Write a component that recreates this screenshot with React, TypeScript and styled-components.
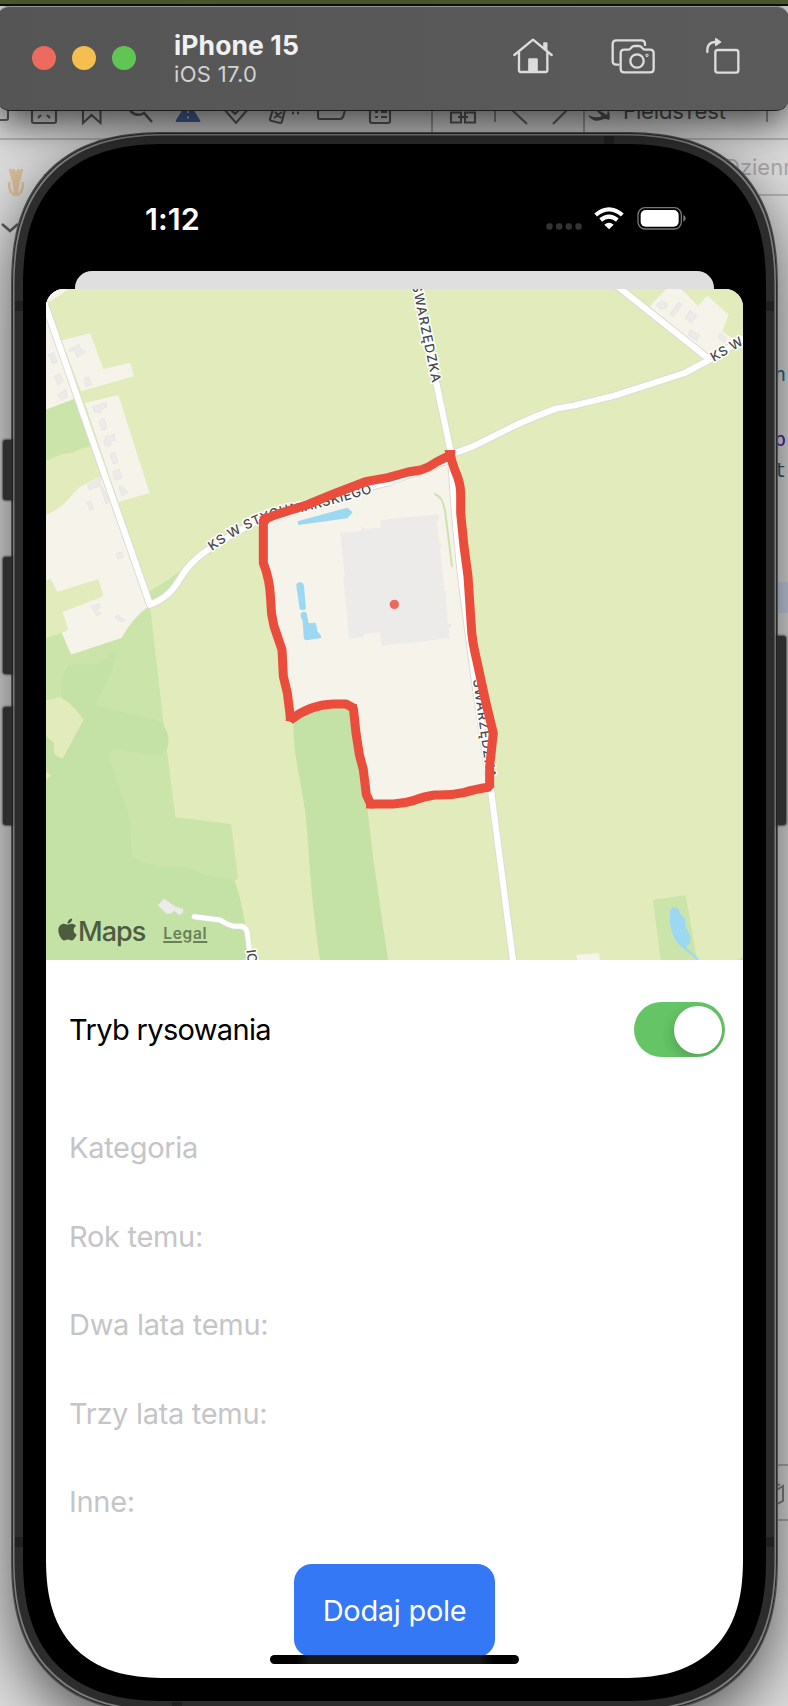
import React from "react";
import styled, { createGlobalStyle, css } from "styled-components";
import { FaApple } from "react-icons/fa";

const GlobalStyle = createGlobalStyle`
  *, *::before, *::after { box-sizing: border-box; }
  body { margin: 0; background: #b0b0b0; }
`;

const sans = `Inter, "Liberation Sans", sans-serif`;

const Desktop = styled.div`
  position: relative;
  display: flex;
  flex-direction: column;
  width: 788px;
  height: 1706px;
  overflow: hidden;
  background: #dcdcdc;
  font-family: ${sans};
`;

/* ---------- editor window behind the simulator ---------- */

const Editor = styled.div`
  position: absolute;
  inset: 0;
  display: flex;
  flex-direction: column;
  padding-top: 100px;
  color: #6c6c6c;
`;

const EditorBar = styled.div`
  display: flex;
  height: 40px;
  border-bottom: 2px solid #b5b5b5;
`;

const EditorTabs = styled.div`
  display: flex;
  justify-content: space-between;
  height: 56px;
`;

const NavigatorMark = styled.div`
  width: 60px;
  height: 100px;
`;

const Crumb = styled.div`
  width: 70px;
  padding-left: 6px;
  overflow: hidden;
  border-bottom: 2px solid #b5b5b5;
  color: #a9a9a9;
  font-size: 22px;
  line-height: 54px;
  white-space: nowrap;
`;

const CodeEdge = styled.div`
  display: flex;
  flex-direction: column;
  align-self: flex-end;
  width: 13px;
  padding-top: 158px;
  font-family: "DejaVu Sans Mono", monospace;
  font-size: 20px;
`;

const CodeGlyph = styled.span<{ $color: string; $height: number }>`
  height: ${(p) => p.$height}px;
  margin-left: -1px;
  color: ${(p) => p.$color};
  line-height: 40px;
`;

const LineHighlight = styled.div`
  height: 31px;
  margin-top: 92px;
  background: #c6d0e4;
`;

const EditorFooter = styled.div`
  height: 57px;
  margin-top: 851px;
  border-top: 2px solid #a9a9a9;
  border-bottom: 2px solid #a9a9a9;
`;

/* ---------- simulator title bar ---------- */

const WallpaperStrip = styled.div`
  position: relative;
  z-index: 3;
  flex: none;
  height: 6px;
  background: #46562a;
  border-bottom: 2px solid #0c0d08;
`;

const TitleBar = styled.header`
  position: relative;
  z-index: 2;
  display: flex;
  align-items: center;
  flex: none;
  width: 792px;
  height: 105px;
  margin-left: -3px;
  padding: 0 48px 0 35px;
  border-radius: 13px;
  border-bottom: 1px solid #1d1d1d;
  background: linear-gradient(90deg, #555 0%, #5b5b5b 100%);
  box-shadow: inset 0 2px 0 -1px #969696, 0 12px 40px rgba(0, 0, 0, 0.72);
`;

const TrafficLights = styled.div`
  display: flex;
  gap: 16px;
`;

const Light = styled.span<{ $color: string }>`
  width: 24px;
  height: 24px;
  border-radius: 50%;
  background: ${(p) => p.$color};
`;

const Titles = styled.div`
  margin-left: 38px;
  flex: 1;
`;

const DeviceName = styled.div`
  color: #f0f0f0;
  font-size: 26.5px;
  font-weight: 700;
  letter-spacing: 0.1px;
  line-height: 32px;
`;

const OsVersion = styled.div`
  color: #d2d2d2;
  font-size: 22px;
  letter-spacing: 0.3px;
  line-height: 27px;
`;

const Tools = styled.div`
  display: flex;
  align-items: center;
  padding-bottom: 5px;
`;

const ToolIcon = styled.svg<{ $gap?: number }>`
  display: block;
  margin-left: ${(p) => p.$gap ?? 0}px;
  fill: none;
  stroke: #dcdcdc;
  stroke-width: 7;
  stroke-linejoin: round;
  stroke-linecap: round;
`;

/* ---------- device ---------- */

const corner = (round: number, smooth: number) => css`
  border-radius: ${round}px;
  @supports (corner-shape: superellipse(1.3)) {
    border-radius: ${smooth}px;
    corner-shape: superellipse(1.3);
  }
`;

const Phone = styled.main`
  position: relative;
  z-index: 1;
  flex: none;
  width: 765px;
  height: 1579px;
  margin: 22px 0 0 12px;
  padding: 11px;
  background: #2c2c2c;
  box-shadow: inset 0 0 0 1px #2a2a2a, inset 0 0 0 2.5px #7c7c7c,
    0 0 0 1px #4e4e4e, 0 20px 60px rgba(0, 0, 0, 0.62);
  ${corner(138, 154)}
`;

const sideRect = css<{ $top: number; $height: number }>`
  position: absolute;
  top: ${(p) => p.$top - 133}px;
  height: ${(p) => p.$height}px;
`;

const SideButton = styled.i<{ $top: number; $height: number; $right?: boolean }>`
  ${sideRect}
  ${(p) => (p.$right ? "right: -9px;" : "left: -9px;")}
  width: 9px;
  border-radius: ${(p) => (p.$right ? "0 3px 3px 0" : "3px 0 0 3px")};
  background: #2d2d2d;
  box-shadow: 0 0 2px 1px rgba(20, 20, 20, 0.6);
`;

const Antenna = styled.i<{ $top: number; $height: number; $left: number; $width: number }>`
  ${sideRect}
  left: ${(p) => p.$left}px;
  width: ${(p) => p.$width}px;
  background: #202020;
`;

const Bezel = styled.div`
  height: 1557px;
  padding: 23px;
  background: #000;
  ${corner(126, 143)}
`;

const Screen = styled.div`
  position: relative;
  display: flex;
  flex-direction: column;
  height: 1511px;
  overflow: hidden;
  background: #000;
  ${corner(103, 120)}
`;

const StatusBar = styled.div`
  display: flex;
  flex: none;
  align-items: center;
  justify-content: space-between;
  height: 104px;
  padding: 0 56px 0 99px;
`;

const Clock = styled.time`
  height: 104px;
  color: #fff;
  font-size: 30.5px;
  font-weight: 600;
  letter-spacing: 0.1px;
  line-height: 104px;
`;

const StatusIcons = styled.svg`
  display: block;
  margin-bottom: 2px;
`;

const SheetBehind = styled.div`
  flex: none;
  width: 639px;
  height: 18px;
  margin: 0 auto;
  border-radius: 17px 17px 0 0;
  background: #dfdfdf;
`;

const Sheet = styled.section`
  display: flex;
  flex: 1;
  flex-direction: column;
  overflow: hidden;
  border-radius: 18px 18px 0 0;
  background: #fff;
`;

const MapView = styled.div`
  position: relative;
  height: 671px;
`;

const MapDrawing = styled.svg`
  display: block;
`;

const Attribution = styled.div`
  position: absolute;
  left: 12px;
  bottom: 12px;
  display: flex;
  align-items: center;
  height: 34px;
  color: #4d5c41;
`;

const AppleMark = styled(FaApple)`
  margin: -3px -4px 0 -3px;
`;

const MapsWord = styled.span`
  margin-left: 2px;
  font-size: 27px;
  font-weight: 500;
  letter-spacing: -1px;
`;

const LegalLink = styled.a`
  margin: 4px 0 0 18px;
  color: #6a8058;
  font-size: 15.5px;
  font-weight: 600;
  letter-spacing: 0.7px;
  text-decoration: underline;
  text-decoration-thickness: 1.5px;
  text-underline-offset: 2px;
`;

const Form = styled.form`
  display: flex;
  flex: 1;
  flex-direction: column;
`;

const ToggleRow = styled.label`
  display: flex;
  align-items: center;
  justify-content: space-between;
  height: 138px;
  padding: 1px 18px 0 23px;
  font-size: 29px;
  letter-spacing: -0.65px;
  color: #000;
`;

const Toggle = styled.span`
  display: flex;
  justify-content: flex-end;
  width: 91px;
  height: 55px;
  padding: 3.5px;
  overflow: hidden;
  border-radius: 28px;
  background: #65c466;
`;

const Knob = styled.span`
  width: 48px;
  height: 48px;
  border-radius: 50%;
  background: #fff;
  box-shadow: -2px 5px 12px rgba(0, 0, 0, 0.16);
`;

const Fields = styled.div`
  display: flex;
  flex-direction: column;
  padding: 6px 0 0 23px;
`;

const Field = styled.div`
  height: 88.6px;
  color: #c5c5c7;
  font-size: 29px;
  letter-spacing: -0.3px;
  line-height: 88.6px;
`;

const Submit = styled.button`
  align-self: center;
  width: 201px;
  height: 93px;
  margin-top: 17px;
  padding: 0;
  border: 0;
  border-radius: 18px;
  background: #3478f6;
  color: #fff;
  font-family: inherit;
  font-size: 29px;
  letter-spacing: -0.3px;
`;

const HomeIndicator = styled.div`
  position: absolute;
  left: 50%;
  bottom: 14px;
  width: 249px;
  height: 9px;
  margin-left: -124.5px;
  border-radius: 5px;
  background: linear-gradient(90deg, #000 10%, #181818 16%, #181818 84%, #000 90%);
`;

const EditorIcons = () => (
  <svg width="788" height="37" viewBox="0 100 788 37" fill="none" stroke="#5f5f5f" strokeWidth="2.100">
    <path d="M0 120H6q2 0 2-2V104M32 104v17q0 2 2 2h20q2 0 2-2v-17M38 118l3-3m6 0l3 3M83 104v19l8.500-8 9 8v-19" />
    <path d="M129 108a10 10 0 0 0 15 5l8 9" strokeWidth="2.600" />
    <path d="M177 122q-2 0-1-2l9-14h6l9 14q1 2-1 2z" fill="#4c66a6" stroke="none" />
    <path d="M188 106v7m0 3v2.500" stroke="#b9bdc8" strokeWidth="2" />
    <path d="M224 109l12 14 12-14M230 109l5 5 6-6M274 106l-4 13q0 2 2 2l8 2q2 0 2-2l4-15M275 112l6 6m1-6l-8 6" />
    <path d="M292 113h2m3 0h2m-4-4h2" strokeWidth="2.500" />
    <path d="M318 104v13q0 2 2 2h20q2 0 3-2l3-10M370 104v17q0 2 2 2h16q2 0 2-2v-17M375 112h3m3 0h6m-12 5h3m3 0h6" />
    <path d="M451 112.500h10v10h-10zM465 112.500h10v10h-10zM458 117h10" />
    <path d="M495 104v18M767 104v18" stroke="#777" strokeWidth="1.500" />
    <path d="M512 110l15 14m26 0l14-14" strokeWidth="2.200" stroke="#6c6c6c" />
    <path d="M432 100v32M584 100v32" stroke="#777" strokeWidth="1.200" />
    <path d="M588 115q8 4 14 1-5-4-7-8l12 7 1-5q3 5 1 10-4-2-8 0-8 3-13-5z" fill="#5c5c5c" stroke="none" />
    <text x="623" y="119" fill="#555" stroke="none" fontSize="22" textLength="103" fontFamily="Inter, sans-serif">FieldsTest</text>
  </svg>
);

const StreetLabels = styled.g`
  fill: #4a4a4a;
  stroke: #fff;
  stroke-width: 9px;
  stroke-linejoin: round;
  paint-order: stroke;
  font-family: ${sans};
  font-size: 39px;
  font-weight: 450;
`;

const roads = [
  "M130 60L450 975C525 945 530 905 560 868Q585 835 640 800Q710 755 790 715Q900 680 1000 650L1164 608L1350 540",
  "M1358 522Q1400 508 1430 495L1544 438Q1610 408 1668 387L1724 377L1844 348L2054 280L2129 240L2240 170",
  "M1850 18L2129 240",
  "M1244 0L1352 515Q1368 780 1392 960L1424 1200L1474 1540L1540 2050",
];

const FieldOutline =
  "M1350 527L1364 570Q1382 610 1382 640V700L1392 800L1404 890L1414 1040Q1415 1080 1432 1150L1447 1220L1459 1275L1480 1360L1469 1460V1522Q1420 1530 1394 1538Q1350 1548 1304 1546Q1270 1550 1240 1563Q1210 1572 1180 1573H1112L1099 1545L1090 1470L1078 1425L1068 1360L1060 1285L1038 1273H1000Q930 1275 872 1320L862 1240L850 1190L846 1110L822 1040Q812 1000 812 960Q810 900 790 850V720L830 704L920 676L1010 639L1100 605L1164 594L1224 577L1262 571Q1285 564 1308 548Z";

const FieldMap = () => (
  <MapDrawing width="697" height="671" viewBox="138 28 2091 2013" preserveAspectRatio="none">
    <rect x="138" y="28" width="2091" height="2013" fill="#e1ebbb" />
    <g fill="#f6f3ea">
      <path d="M138 28H205Q170 55 138 72zM138 80L160 130L236 354L138 390zM185 182L271 161L310 268L391 249L402 290L243 335zM255 370L355 346L449 640L355 667z" />
      <path d="M138 706C200 680 210 645 240 622Q270 605 303 590L450 975Q390 1025 365 1075L213 1125L185 1060L205 1050L188 997L310 950L295 898L172 937L152 897L138 902z" />
      <path d="M1949 80L1999 28H2044L2094 78L2122 48L2186 105L2167 155L2204 180L2129 240zM1729 2025L1797 2020L1800 2041H1732z" />
    </g>
    <g fill="#cae4aa">
      <path d="M138 390L228 356L277 498Q250 502 215 520Q190 518 138 543zM450 935Q500 905 545 872L560 872L520 945L450 975z" />
      <path d="M138 1075L185 1060L213 1125L365 1075Q400 1010 450 978L491 1335L526 1613L693 1633L714 1795L702 1806L560 1900L138 1800z" />
      <path d="M1959 1860L2057 1847L2091 2041H1982zM2210 2041L2229 2032V2041z" />
    </g>
    <g fill="#c4e1a6">
      <path d="M138 1255H183Q186 1155 215 1155C300 1156 300 1155 312 1140C325 1120 335 1122 345 1122C345 1160 320 1210 282 1275L470 1322Q490 1328 492 1340Q512 1370 502 1405Q492 1430 460 1425L350 1410Q328 1412 328 1430C330 1470 385 1570 388 1625C395 1680 390 1720 405 1735C430 1755 470 1757 500 1758C570 1760 590 1775 620 1787C660 1798 690 1795 703 1805Q718 1830 738 1950L745 2041H138z" />
      <path d="M880 1325Q880 1400 889 1440Q905 1530 915 1590C930 1720 925 1780 960 2041H1164L1120 1740L1100 1570L1060 1290L1000 1274z" />
    </g>
    <path d="M138 1260L182 1253Q215 1270 251 1320L188 1437Q165 1428 162 1420V1390L138 1370zM138 1476L153 1486L138 1502z" fill="#e1ebbb" />
    <path d={FieldOutline} fill="#f6f3ea" />
    <g fill="#ecebe9">
      <path d="M1020 760L1085 753L1084 742H1092L1093 748L1142 744V722L1316 703L1317 722L1309 725L1318 792L1325 793V800L1319 802L1334 934L1343 935L1336 943L1343 1033L1355 1034L1354 1042L1346 1044L1349 1075L1145 1098L1140 1058L1090 1062V1072L1047 1077L1030 893L1035 890z" />
      <g stroke="#dedddb" strokeWidth="1.500">
        <path d="M208 208L238 195L242 210L257 217L232 233L222 210L210 216zM145 225L160 219L172 246L159 252zM163 290L180 283L190 305L174 315zM172 345L198 330L202 352L185 362zM252 297L266 292L275 315L258 321zM278 382L318 368L320 382L304 390L300 401L284 396zM297 423L312 417L321 447L306 452zM315 472L343 464L345 482L332 485V496L318 499L310 485L316 482zM330 523L344 519L354 549L340 553zM338 576L358 569L366 595L346 601zM357 622L367 618L383 638L366 648zM261 668L272 664L282 688L270 692zM349 822L364 817L371 832L354 838z" />
        <path d="M273 980L298 972L300 985L290 990L292 998L306 1000L290 1008zM352 1006L374 1020L368 1028L345 1014zM262 615L302 594L300 612L330 665L318 672L300 618L268 630z" />
        <path d="M473 1877L492 1857L525 1880L549 1887V1900L538 1907L522 1893L512 1902H500z" />
        <path d="M1970 75L1985 64L2000 70L2001 82L1982 90zM2010 104L2035 69L2045 73L2022 110zM2070 92L2090 108L2075 131L2055 115zM2072 150L2098 165L2090 183L2064 166zM2160 160L2180 175L2172 188L2156 175z" />
      </g>
    </g>
    <g fill="#9dd8f2">
      <path d="M893 725L1042 684L1058 698L1042 716L895 736zM889 918Q888 909 900 908Q911 908 912 920L918 988Q905 994 899 988zM902 1002Q910 992 920 1000L926 1031L946 1029Q952 1038 952 1055L963 1068V1075L920 1082Q912 1082 911 1072L908 1020Q901 1018 902 1002z" />
      <path d="M2010 1895Q2012 1880 2028 1883Q2038 1888 2040 1902L2055 1918L2056 1942Q2075 1968 2070 1988L2058 2004L2098 2038L2092 2041L2050 2006Q2005 1975 2010 1895z" />
    </g>
    <path d="M1303 643Q1330 650 1336 700L1356 861" fill="none" stroke="#cae4aa" strokeWidth="6" />
    <g fill="none" strokeLinejoin="round">
      {roads.map((d) => <path key={d} d={d} stroke="#dcdcd6" strokeWidth={24} />)}
      <path d="M583 1911L660 1921Q680 1935 702 1940H727Q740 1945 742 1960L752 2041" stroke="#d8dcce" strokeWidth="19" strokeLinecap="round" />
      {roads.map((d) => <path key={d} d={d} stroke="#fff" strokeWidth={18} />)}
      <path d="M583 1911L660 1921Q680 1935 702 1940H727Q740 1945 742 1960L752 2041" stroke="#fff" strokeWidth="15" strokeLinecap="round" />
    </g>
    <defs>
      <path id="ks" d="M636 814Q700 768 765 738Q850 700 900 698Q1000 676 1140 632" />
      <path id="sw1" d="M1236 16L1305 350" />
      <path id="sw2" d="M1419 1200L1464 1520" />
      <path id="ks2" d="M2141 247L2260 177" />
    </defs>
    <StreetLabels>
      <text><textPath href="#ks" textLength="516">KS W STYCHNIARSKIEGO</textPath></text>
      <text><textPath href="#sw1" textLength="300">SWARZĘDZKA</textPath></text>
      <text><textPath href="#sw2" textLength="300">SWARZĘDZKA</textPath></text>
      <text><textPath href="#ks2" textLength="106">KS W</textPath></text>
      <text transform="translate(739 2012) rotate(82)">IC</text>
    </StreetLabels>
    <path d={FieldOutline} fill="none" stroke="#eb4d3d" strokeWidth="27" strokeLinejoin="bevel" />
    <path d="M1334 511H1366V545L1340 546zM778 712L795 700L815 706L806 732H792z" fill="#eb4d3d" />
    <path d="M858 1300L882 1300L890 1318L878 1333L872 1324H857z" fill="#eb4d3d" />
    <path d="M1050 1274H1071V1300H1050zM1098 1560H1120V1586.500H1098z" fill="#eb4d3d" />
    <circle cx="1183" cy="974" r="14" fill="#ec695d" />
  </MapDrawing>
);

const fieldNames = ["Kategoria", "Rok temu:", "Dwa lata temu:", "Trzy lata temu:", "Inne:"];

export default function App() {
  return (
    <Desktop>
      <GlobalStyle />
      <Editor>
        <EditorBar><EditorIcons /></EditorBar>
        <EditorTabs>
          <NavigatorMark>
            <svg width="60" height="100" viewBox="0 139 60 100" fill="none">
              <path d="M13.500 168V182L16 195L18.500 182V168M14 194Q8 190 9.500 181M18 194Q24 190 22.500 181M13 180L10 168M19 180L22 168M16 170V194" stroke="#d9bd9a" strokeWidth="2.600" />
              <path d="M44 173h6v5h-6z" fill="#333" />
              <path d="M2 223l8 7 8-7" stroke="#5c5c5c" strokeWidth="2.600" />
            </svg>
          </NavigatorMark>
          <Crumb>Dziennik</Crumb>
        </EditorTabs>
        <CodeEdge>
          <CodeGlyph $color="#2c6487" $height={65}>n</CodeGlyph>
          <CodeGlyph $color="#4a22a8" $height={31}>p</CodeGlyph>
          <CodeGlyph $color="#2d5561" $height={40}>t</CodeGlyph>
          <LineHighlight />
          <EditorFooter>
            <svg width="13" height="53" viewBox="776 1466 13 53" fill="none" stroke="#808080" strokeWidth="2">
              <path d="M776 1487l5-3M776 1491l8-5v15l-8 4" />
            </svg>
          </EditorFooter>
        </CodeEdge>
      </Editor>

      <WallpaperStrip />
      <TitleBar>
        <TrafficLights>
          <Light $color="#ed6a5e" />
          <Light $color="#f4bf4f" />
          <Light $color="#61c554" />
        </TrafficLights>
        <Titles>
          <DeviceName>iPhone 15</DeviceName>
          <OsVersion>iOS 17.0</OsVersion>
        </Titles>
        <Tools>
          <ToolIcon width="40" height="38" viewBox="377 110 120 114">
            <path d="M381 164L437 118L493 164M395 156V210Q395 215 400 215H475Q480 215 480 210V156" />
            <path d="M471 143V129H477V147z" />
            <path d="M426 177H448V214H426z" fill="#dcdcdc" />
          </ToolIcon>
          <ToolIcon $gap={58} width="44" height="38" viewBox="670 112 132 114">
            <path d="M692 195H686Q675 195 675 184V133Q675 122 686 122H761Q772 122 772 133V136" />
            <path d="M710 150H722Q727 150 730 145Q734 139 740 139H754Q760 139 764 145Q767 150 772 150H787Q798 150 798 161V207Q798 218 787 218H710Q699 218 699 207V161Q699 150 710 150z" />
            <circle cx="748" cy="184" r="20" />
            <circle cx="778" cy="167" r="1.500" />
          </ToolIcon>
          <ToolIcon $gap={50} width="36" height="38" viewBox="950 106 108 114">
            <rect x="981" y="145" width="69" height="68" rx="7" />
            <path d="M957 151V144Q958 122 980 121" />
            <path d="M982 111L997 121L982 131z" fill="#dcdcdc" strokeWidth="4" />
          </ToolIcon>
        </Tools>
      </TitleBar>

      <Phone>
        <SideButton $top={440} $height={60} />
        <SideButton $top={557} $height={117} />
        <SideButton $top={707} $height={118} />
        <SideButton $top={636} $height={189} $right />
        <Antenna $top={136} $height={8} $left={592} $width={10} />
        <Antenna $top={301} $height={10} $left={3} $width={8} />
        <Antenna $top={301} $height={10} $left={754} $width={8} />
        <Antenna $top={1537} $height={10} $left={3} $width={8} />
        <Antenna $top={1537} $height={10} $left={754} $width={8} />
        <Antenna $top={1702} $height={8} $left={160} $width={10} />
        <Bezel>
          <Screen>
            <StatusBar>
              <Clock>1:12</Clock>
              <StatusIcons width="142" height="26" viewBox="469 616 426 78">
                <g fill="#333335">
                  <rect x="473" y="671" width="19" height="19" rx="7" />
                  <rect x="502" y="671" width="19" height="19" rx="7" />
                  <rect x="531" y="671" width="19" height="19" rx="7" />
                  <rect x="560" y="671" width="19" height="19" rx="7" />
                </g>
                <g fill="none" stroke="#fff" strokeWidth="12.500">
                  <path d="M621 646Q661 612 701 646" />
                  <path d="M636 661Q661 641 686 661" />
                </g>
                <path d="M647 675Q661 664 675 675L661 689z" fill="#fff" />
                <rect x="748" y="624" width="130" height="64" rx="21" fill="none" stroke="#77777a" strokeWidth="4" />
                <rect x="756" y="631" width="114" height="50" rx="15" fill="#fff" />
                <path d="M884 646Q891 649 891 656Q891 663 884 666z" fill="#77777a" />
              </StatusIcons>
            </StatusBar>
            <SheetBehind />
            <Sheet>
              <MapView>
                <FieldMap />
                <Attribution>
                  <AppleMark size={25} />
                  <MapsWord>Maps</MapsWord>
                  <LegalLink>Legal</LegalLink>
                </Attribution>
              </MapView>
              <Form>
                <ToggleRow>
                  Tryb rysowania
                  <Toggle><Knob /></Toggle>
                </ToggleRow>
                <Fields>
                  {fieldNames.map((name) => <Field key={name}>{name}</Field>)}
                </Fields>
                <Submit type="button">Dodaj pole</Submit>
              </Form>
            </Sheet>
            <HomeIndicator />
          </Screen>
        </Bezel>
      </Phone>
    </Desktop>
  );
}
